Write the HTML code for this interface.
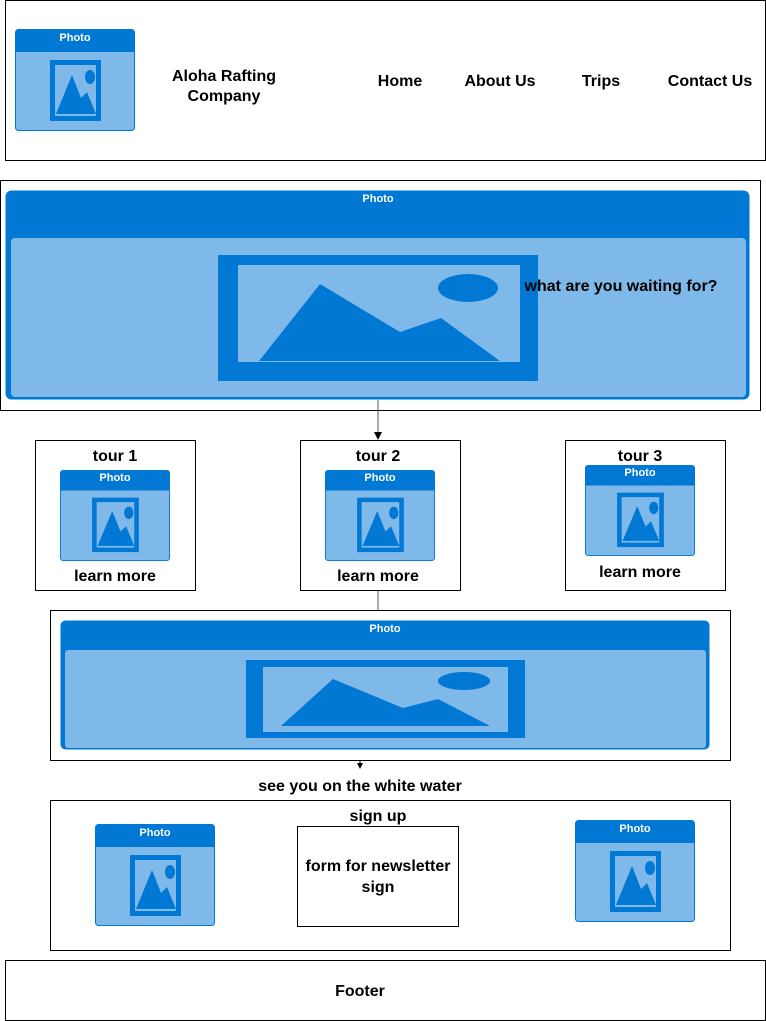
<!DOCTYPE html>
<html><head><meta charset="utf-8"><style>
html,body{margin:0;padding:0;background:#fff}
svg{display:block}
text{font-family:"Liberation Sans",Arial,sans-serif;font-weight:bold}
</style></head><body>
<svg width="766" height="1021" viewBox="0 0 766 1021" xmlns="http://www.w3.org/2000/svg">
<defs>
<symbol id="ph" viewBox="0 0 120 102" preserveAspectRatio="none">
<rect x="0.5" y="0.5" width="119" height="101" rx="3" fill="#7fb9e9" stroke="#0078d4"/>
<path d="M3.5 0.5 H116.5 A3 3 0 0 1 119.5 3.5 V23 H0.5 V3.5 A3 3 0 0 1 3.5 0.5Z" fill="#0078d4"/>
<rect x="37.5" y="33.5" width="46" height="56" fill="none" stroke="#0078d4" stroke-width="5"/>
<polygon points="41,85 57,46 66,69 72,63 81,85" fill="#0078d4"/>
<ellipse cx="75" cy="48" rx="5" ry="7" fill="#0078d4"/>
</symbol>
</defs>
<g fill="none" stroke="#000" stroke-width="1">
<rect x="5.5" y="0.5" width="760" height="160"/>
<rect x="0.5" y="180.5" width="760" height="230"/>
<rect x="35.5" y="440.5" width="160" height="150"/>
<rect x="300.5" y="440.5" width="160" height="150"/>
<rect x="565.5" y="440.5" width="160" height="150"/>
<rect x="50.5" y="610.5" width="680" height="150"/>
<rect x="50.5" y="800.5" width="680" height="150"/>
<rect x="297.5" y="826.5" width="161" height="100"/>
<rect x="5.5" y="960.5" width="760" height="60"/>
</g>
<use href="#ph" x="15" y="29" width="120" height="102"/>
<text x="75" y="41" fill="#fff" font-size="11" text-anchor="middle">Photo</text>
<text x="224" y="81" font-size="16" text-anchor="middle">Aloha Rafting</text>
<text x="224" y="101" font-size="16" text-anchor="middle">Company</text>
<text x="400" y="86" font-size="16" text-anchor="middle">Home</text>
<text x="500" y="86" font-size="16" text-anchor="middle">About Us</text>
<text x="601" y="86" font-size="16" text-anchor="middle">Trips</text>
<text x="710" y="86" font-size="16" text-anchor="middle">Contact Us</text>
<rect x="5.5" y="190.5" width="744" height="209" rx="6" fill="#0078d4"/>
<rect x="11" y="238" width="735" height="159" rx="4" fill="#7fb9e9"/>
<rect x="218" y="255" width="320" height="126" fill="#0078d4"/>
<rect x="238" y="265" width="282" height="97" fill="#7fb9e9"/>
<polygon points="259,361 320,284 400,332 441,318 500,361" fill="#0078d4"/>
<ellipse cx="468" cy="288" rx="30" ry="14" fill="#0078d4"/>
<text x="378" y="202" fill="#fff" font-size="11" text-anchor="middle">Photo</text>
<text x="621" y="291" font-size="16" text-anchor="middle">what are you waiting for?</text>
<line x1="378" y1="400" x2="378" y2="433" stroke="#555"/>
<polygon points="374,432 382,432 378,440" fill="#000"/>
<line x1="378" y1="591" x2="378" y2="610" stroke="#555"/>
<line x1="360" y1="761" x2="360" y2="764" stroke="#000"/>
<polygon points="357,763 363,763 360,769" fill="#000"/>
<text x="115" y="461" font-size="16" text-anchor="middle">tour 1</text>
<use href="#ph" x="60" y="470" width="110" height="91"/>
<text x="115" y="481" fill="#fff" font-size="11" text-anchor="middle">Photo</text>
<text x="115" y="581" font-size="16" text-anchor="middle">learn more</text>
<text x="378" y="461" font-size="16" text-anchor="middle">tour 2</text>
<use href="#ph" x="325" y="470" width="110" height="91"/>
<text x="380" y="481" fill="#fff" font-size="11" text-anchor="middle">Photo</text>
<text x="378" y="581" font-size="16" text-anchor="middle">learn more</text>
<text x="640" y="461" font-size="16" text-anchor="middle">tour 3</text>
<use href="#ph" x="585" y="465" width="110" height="91"/>
<text x="640" y="476" fill="#fff" font-size="11" text-anchor="middle">Photo</text>
<text x="640" y="577" font-size="16" text-anchor="middle">learn more</text>
<rect x="60.5" y="620.5" width="649" height="129" rx="5" fill="#0078d4"/>
<rect x="65" y="650" width="641" height="98" rx="3" fill="#7fb9e9"/>
<rect x="246" y="660" width="279" height="78" fill="#0078d4"/>
<rect x="263" y="667" width="245" height="65" fill="#7fb9e9"/>
<polygon points="281,726 333,679 403,708 438,699 490,726" fill="#0078d4"/>
<ellipse cx="464" cy="681" rx="26" ry="9" fill="#0078d4"/>
<text x="385" y="632" fill="#fff" font-size="11" text-anchor="middle">Photo</text>
<text x="360" y="791" font-size="16" text-anchor="middle">see you on the white water</text>
<use href="#ph" x="95" y="824" width="120" height="102"/>
<text x="155" y="836" fill="#fff" font-size="11" text-anchor="middle">Photo</text>
<use href="#ph" x="575" y="820" width="120" height="102"/>
<text x="635" y="832" fill="#fff" font-size="11" text-anchor="middle">Photo</text>
<text x="378" y="821" font-size="16" text-anchor="middle">sign up</text>
<text x="378" y="871" font-size="16" text-anchor="middle">form for newsletter</text>
<text x="378" y="892" font-size="16" text-anchor="middle">sign</text>
<text x="360" y="996" font-size="16" text-anchor="middle">Footer</text>
</svg>
</body></html>
